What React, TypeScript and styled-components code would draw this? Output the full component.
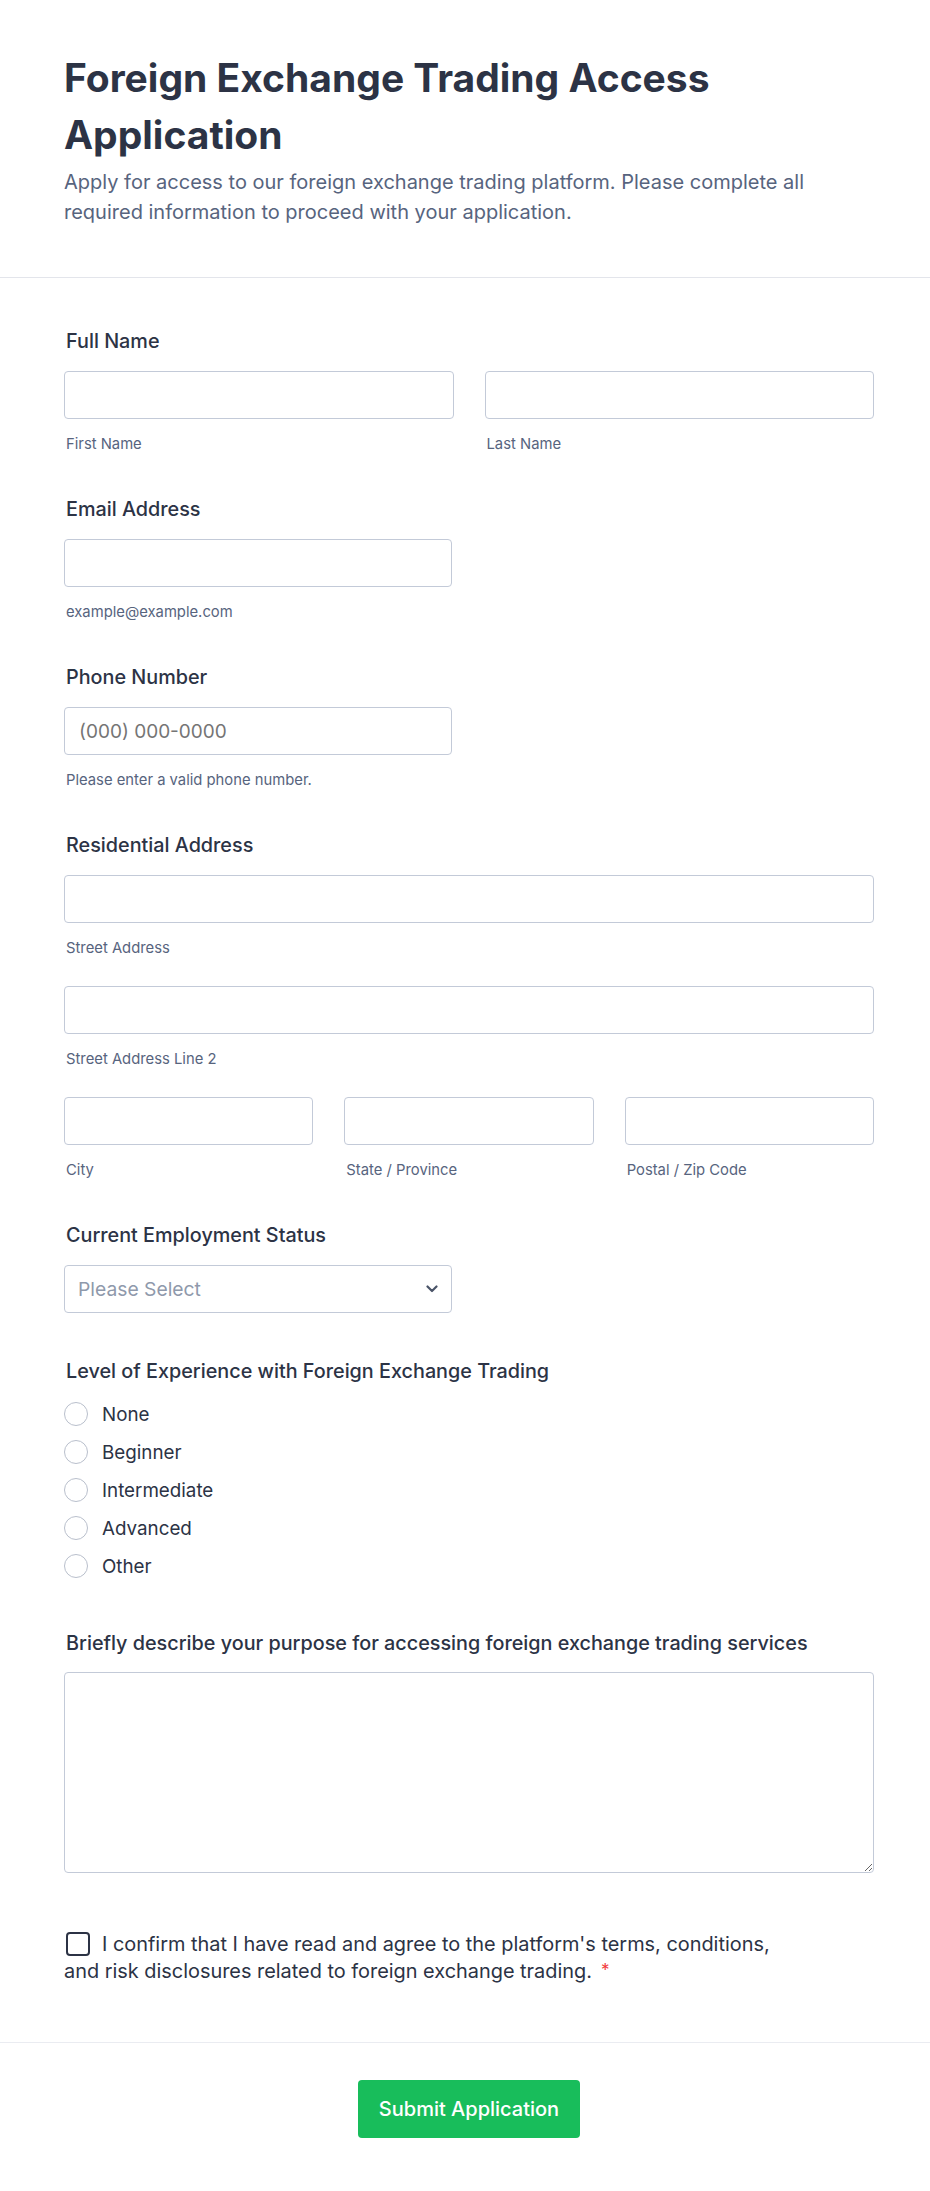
import React from 'react';
import styled, { createGlobalStyle } from 'styled-components';

const experienceLevels = ['None', 'Beginner', 'Intermediate', 'Advanced', 'Other'];

const App = () => {
  return (
    <Page>
      <GlobalStyle />
      <Header>
        <Title>Foreign Exchange Trading Access Application</Title>
        <Subtitle>
          Apply for access to our foreign exchange trading platform. Please complete all required
          information to proceed with your application.
        </Subtitle>
      </Header>

      <Form>
        <Field>
          <Label>Full Name</Label>
          <Columns $count={2}>
            <div>
              <Input type="text" />
              <SubLabel>First Name</SubLabel>
            </div>
            <div>
              <Input type="text" />
              <SubLabel>Last Name</SubLabel>
            </div>
          </Columns>
        </Field>

        <Field>
          <Label>Email Address</Label>
          <HalfBox>
            <Input type="email" />
            <SubLabel>example@example.com</SubLabel>
          </HalfBox>
        </Field>

        <Field>
          <Label>Phone Number</Label>
          <HalfBox>
            <Input type="tel" placeholder="(000) 000-0000" />
            <SubLabel>Please enter a valid phone number.</SubLabel>
          </HalfBox>
        </Field>

        <Field>
          <Label>Residential Address</Label>
          <AddressLine>
            <Input type="text" />
            <SubLabel>Street Address</SubLabel>
          </AddressLine>
          <AddressLine>
            <Input type="text" />
            <SubLabel>Street Address Line 2</SubLabel>
          </AddressLine>
          <Columns $count={3}>
            <div>
              <Input type="text" />
              <SubLabel>City</SubLabel>
            </div>
            <div>
              <Input type="text" />
              <SubLabel>State / Province</SubLabel>
            </div>
            <div>
              <Input type="text" />
              <SubLabel>Postal / Zip Code</SubLabel>
            </div>
          </Columns>
        </Field>

        <Field $plain>
          <Label>Current Employment Status</Label>
          <HalfBox>
            <SelectWrap>
              <Select defaultValue="">
                <option value="" disabled>
                  Please Select
                </option>
              </Select>
              <Chevron viewBox="0 0 12 8" aria-hidden="true">
                <path d="M1.5 1.5 6 6l4.5-4.5" />
              </Chevron>
            </SelectWrap>
          </HalfBox>
        </Field>

        <Field $plain>
          <Label>Level of Experience with Foreign Exchange Trading</Label>
          <RadioList>
            {experienceLevels.map((level) => (
              <RadioRow key={level}>
                <Radio type="radio" name="experience" value={level} />
                {level}
              </RadioRow>
            ))}
          </RadioList>
        </Field>

        <Field $plain>
          <Label>Briefly describe your purpose for accessing foreign exchange trading services</Label>
          <TextArea />
        </Field>

        <Consent>
          <Checkbox type="checkbox" />
          I confirm that I have read and agree to the platform's terms, conditions, and risk
          disclosures related to foreign exchange trading.
          <Required>*</Required>
        </Consent>
      </Form>

      <Footer>
        <SubmitButton type="button">Submit Application</SubmitButton>
      </Footer>
    </Page>
  );
};

const GlobalStyle = createGlobalStyle`
  * {
    box-sizing: border-box;
  }

  body {
    margin: 0;
    background: #ffffff;
    font-family: Inter, 'Noto Sans', sans-serif;
    color: #2c3345;
  }
`;

const Page = styled.div`
  width: 930px;
  background: #ffffff;
`;

const Header = styled.header`
  padding: 49px 56px 50px 64px;
  border-bottom: 1px solid #e3e5eb;
`;

const Title = styled.h1`
  margin: 0 0 4px;

  font-size: 39px;
  font-weight: 700;
  line-height: 57px;
  color: #2c3345;
`;

const Subtitle = styled.p`
  margin: 0;

  font-size: 20px;
  line-height: 30px;
  color: #57647e;
`;

const Form = styled.form`
  padding: 51px 56px 58px 64px;
  border-bottom: 1px solid #eaecf1;
`;

const Field = styled.div<{ $plain?: boolean }>`
  margin-bottom: ${({ $plain }) => ($plain ? '46px' : '44px')};
`;

const Label = styled.label`
  display: block;
  margin: 0 0 18px 2px;

  font-size: 19.8px;
  font-weight: 500;
  line-height: 24px;
  color: #2c3345;
`;

const Columns = styled.div<{ $count: number }>`
  display: grid;
  grid-template-columns: repeat(${({ $count }) => $count}, 1fr);
  column-gap: 31px;
`;

const HalfBox = styled.div`
  width: 388px;
`;

const AddressLine = styled.div`
  margin-bottom: 29px;
`;

const Input = styled.input`
  display: block;
  width: 100%;
  height: 48px;
  padding: 0 14px;

  font-family: inherit;
  font-size: 19px;
  color: #2c3345;
  background: #ffffff;
  border: 1px solid #c3cad8;
  border-radius: 4px;
  outline: none;

  ::placeholder {
    color: #8f99ab;
  }
`;

const SubLabel = styled.span`
  display: block;
  margin: 16px 0 0 2px;

  font-size: 14.8px;
  line-height: 18px;
  color: #57647e;
`;

const SelectWrap = styled.div`
  position: relative;
`;

const Select = styled.select`
  display: block;
  width: 100%;
  height: 48px;
  padding: 0 40px 0 13px;

  font-family: inherit;
  font-size: 19.3px;
  color: #8f99ab;
  background: #ffffff;
  border: 1px solid #c3cad8;
  border-radius: 4px;
  appearance: none;
  outline: none;
`;

const Chevron = styled.svg`
  position: absolute;
  top: 20px;
  right: 14px;
  width: 12px;
  height: 8px;
  pointer-events: none;

  fill: none;
  stroke: #4a5468;
  stroke-width: 2.2;
  stroke-linecap: round;
  stroke-linejoin: round;
`;

const RadioList = styled.div`
  display: flex;
  flex-direction: column;
  margin-top: -6px;
`;

const RadioRow = styled.label`
  display: flex;
  align-items: center;
  gap: 14px;
  height: 38px;

  font-size: 18.8px;
  color: #2c3345;
  cursor: pointer;
`;

const Radio = styled.input`
  width: 24px;
  height: 24px;
  margin: 0;
  flex-shrink: 0;

  appearance: none;
  border: 1.5px solid #b9bfcc;
  border-radius: 50%;
  background: #ffffff;
`;

const TextArea = styled.textarea`
  display: block;
  width: 100%;
  height: 201px;
  margin-top: -1px;
  padding: 12px 14px;

  font-family: inherit;
  font-size: 18px;
  color: #2c3345;
  border: 1px solid #c3cad8;
  border-radius: 4px;
  outline: none;
  resize: vertical;
`;

const Consent = styled.label`
  display: block;
  max-width: 722px;
  margin-top: 58px;

  font-size: 19.9px;
  line-height: 26px;
  color: #2c3345;
`;

const Checkbox = styled.input`
  width: 24px;
  height: 24px;
  margin: 0 12px 0 2px;
  vertical-align: -5px;

  appearance: none;
  border: 2px solid #2c3345;
  border-radius: 4px;
  background: #ffffff;
`;

const Required = styled.span`
  margin-left: 9px;

  font-size: 17px;
  vertical-align: 2px;
  color: #f23a3c;
`;

const Footer = styled.div`
  display: flex;
  justify-content: center;
  padding: 37px 56px 50px 64px;
`;

const SubmitButton = styled.button`
  height: 58px;
  padding: 0 21px;

  font-family: inherit;
  font-size: 20px;
  font-weight: 500;
  color: #ffffff;
  background: #18bd5b;
  border: none;
  border-radius: 4px;
  cursor: pointer;
`;

export default App;
